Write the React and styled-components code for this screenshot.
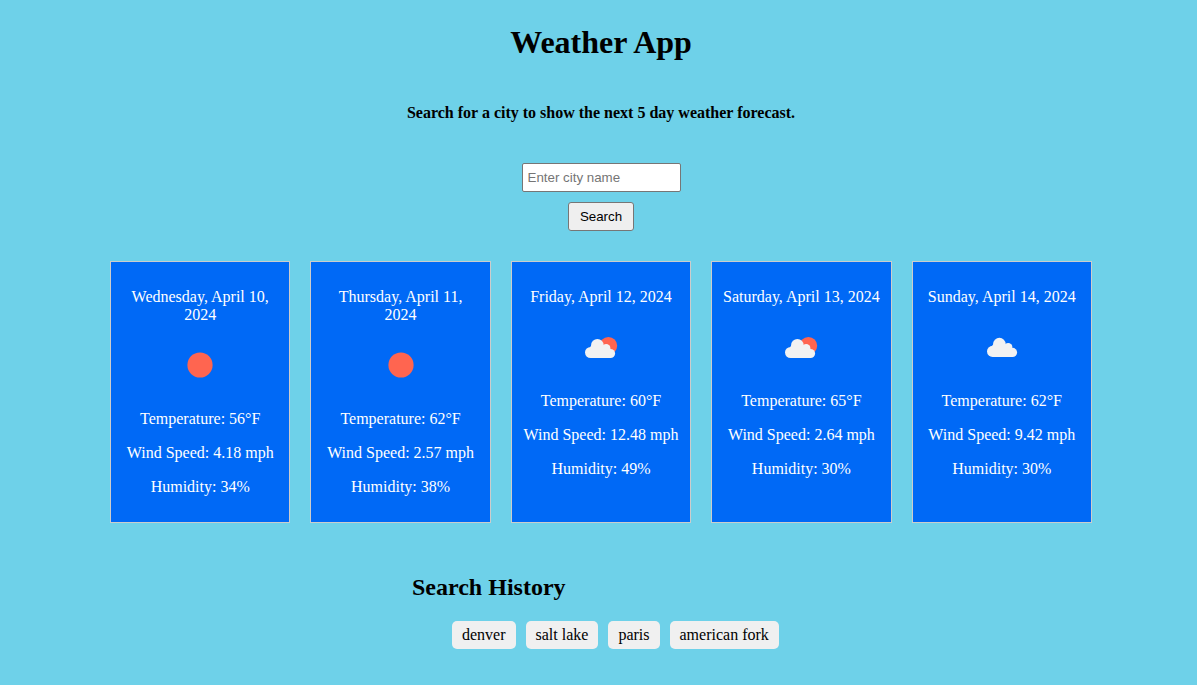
import React from "react";
import styled, { createGlobalStyle } from "styled-components";

const GlobalStyle = createGlobalStyle`
  body {
    margin: 0;
    background: #6ed1e9;
    color: #000;
    font-family: "Liberation Serif", "Times New Roman", serif;
    font-size: 16px;
    line-height: 18px;
  }
`;

const Page = styled.div`
  display: flex;
  flex-direction: column;
  align-items: center;
  padding: 20px 16px 36px 21px;
`;

const Title = styled.h1`
  margin: 0;
  font-size: 32px;
  line-height: 44px;
`;

const Intro = styled.p`
  margin: 40px 0 41px;
  font-weight: bold;
`;

const SearchForm = styled.form`
  display: flex;
  flex-direction: column;
  align-items: center;
  gap: 10px;
`;

const CityInput = styled.input`
  box-sizing: border-box;
  width: 159px;
  height: 29px;
  padding: 5px;
  border: 1px solid #767676;
  border-radius: 2px;
  font-family: "Liberation Sans", Arial, sans-serif;
`;

const SearchButton = styled.button`
  box-sizing: border-box;
  height: 29px;
  padding: 5px 11px;
  border: 1px solid #767676;
  border-radius: 3px;
  background: #efefef;
  color: #000;
  font-family: "Liberation Sans", Arial, sans-serif;
`;

const Forecast = styled.section`
  display: grid;
  grid-template-columns: repeat(5, 1fr);
  gap: 20px;
  width: 100%;
  max-width: 982px;
  margin-top: 30px;
`;

const DayCard = styled.article`
  padding: 10px;
  border: 1px solid #ccc;
  background: #0069f6;
  color: #fff;
  text-align: center;
`;

const CardLine = styled.p`
  margin: 16px 0;
`;

const WeatherIcon = styled.svg`
  display: block;
  width: 50px;
  height: 50px;
  margin: 0 auto 20px;
`;

const History = styled.section`
  width: 378px;
  margin-top: 50px;
`;

const HistoryTitle = styled.h2`
  margin: 0 0 20px;
  font-size: 24px;
  line-height: 28px;
`;

const HistoryList = styled.ul`
  display: flex;
  gap: 10px;
  margin: 0;
  padding: 0 0 0 40px;
  list-style: none;
`;

const HistoryItem = styled.li`
  padding: 5px 10px;
  border-radius: 5px;
  background: #f0f0f0;
  white-space: nowrap;
`;

const days = [
  { date: "Wednesday, April 10, 2024", icon: "sun", temp: 56, wind: 4.18, humidity: 34 },
  { date: "Thursday, April 11, 2024", icon: "sun", temp: 62, wind: 2.57, humidity: 38 },
  { date: "Friday, April 12, 2024", icon: "partly", temp: 60, wind: 12.48, humidity: 49 },
  { date: "Saturday, April 13, 2024", icon: "partly", temp: 65, wind: 2.64, humidity: 30 },
  { date: "Sunday, April 14, 2024", icon: "cloud", temp: 62, wind: 9.42, humidity: 30 },
];

const history = ["denver", "salt lake", "paris", "american fork"];

const Cloud = ({ x, y }) => (
  <g fill="#f2f2f2" transform={`translate(${x} ${y})`}>
    <circle cx="5.6" cy="13.3" r="5.6" />
    <circle cx="12.4" cy="6" r="6.3" />
    <circle cx="21.2" cy="9" r="4.2" />
    <circle cx="25.5" cy="14.3" r="4.6" />
    <path d="M5 8 L6.5 6 H18 L25 9.6 L26 18.9 H5.6Z" />
  </g>
);

const ConditionIcon = ({ kind }) => (
  <WeatherIcon viewBox="0 0 50 50" aria-hidden="true">
    {kind === "sun" && <circle cx="25" cy="25" r="12.6" fill="#ff6550" />}
    {kind === "partly" && <circle cx="32.4" cy="23.8" r="8.8" fill="#ff6550" />}
    {kind === "partly" && <Cloud x={9} y={17.2} />}
    {kind === "cloud" && <Cloud x={10} y={16.1} />}
  </WeatherIcon>
);

export default function App() {
  return (
    <>
      <GlobalStyle />
      <Page>
        <Title>Weather App</Title>
        <Intro>Search for a city to show the next 5 day weather forecast.</Intro>
        <SearchForm onSubmit={(e) => e.preventDefault()}>
          <CityInput type="text" aria-label="City name" placeholder="Enter city name" />
          <SearchButton type="submit">Search</SearchButton>
        </SearchForm>
        <Forecast>
          {days.map((day) => (
            <DayCard key={day.date}>
              <CardLine>{day.date}</CardLine>
              <ConditionIcon kind={day.icon} />
              <CardLine>Temperature: {day.temp}°F</CardLine>
              <CardLine>Wind Speed: {day.wind} mph</CardLine>
              <CardLine>Humidity: {day.humidity}%</CardLine>
            </DayCard>
          ))}
        </Forecast>
        <History>
          <HistoryTitle>Search History</HistoryTitle>
          <HistoryList>
            {history.map((city) => (
              <HistoryItem key={city}>{city}</HistoryItem>
            ))}
          </HistoryList>
        </History>
      </Page>
    </>
  );
}
